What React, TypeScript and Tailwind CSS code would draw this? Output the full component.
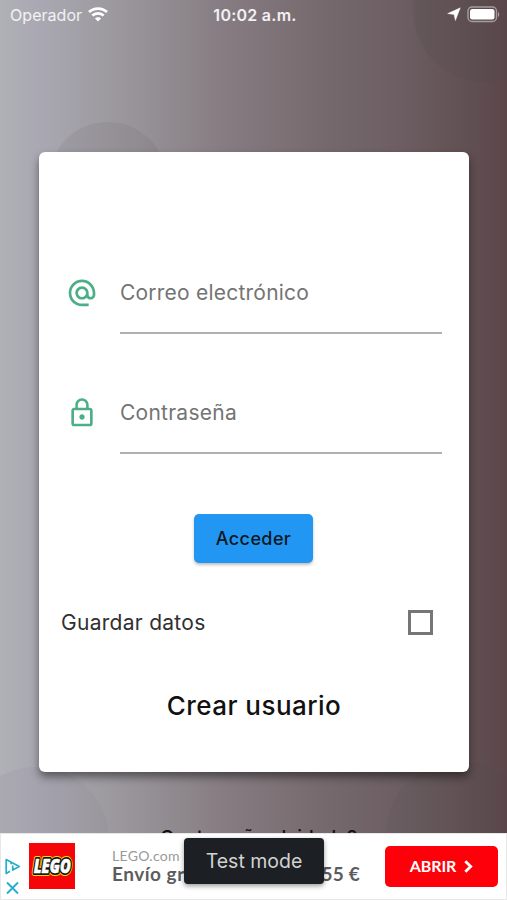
import React from "react";

function WifiIcon() {
  return (
    <svg width="20" height="15" viewBox="0 0 20 15" fill="none" stroke="#fff" strokeWidth="2.7">
      <path d="M1 5.1C6 .4 14 .4 19 5.1" />
      <path d="M4.3 8.6C7.5 5.7 12.5 5.7 15.7 8.6" />
      <path d="M10 14.4L6.9 11.4C8.7 9.8 11.3 9.8 13.1 11.4Z" fill="#fff" stroke="none" />
    </svg>
  );
}

function StatusBar() {
  return (
    <header className="relative flex h-[30px] shrink-0 items-center pl-[10px] pr-[7px] text-[16px] text-white">
      <div className="flex flex-1 items-center gap-[6px]">
        <span className="tracking-[0.05px] text-white/85">Operador</span>
        <span className="-mt-[2px]"><WifiIcon /></span>
      </div>
      <span className="text-[16px] font-semibold tracking-[0.25px] text-white/90">10:02 a.m.</span>
      <div className="-mt-[2px] flex flex-1 items-center justify-end gap-[6px]">
        <svg width="14" height="14" viewBox="0 0 14 14" fill="#fff">
          <path d="M13.3.8L8.4 13.6L7 7.6L.6 6.6Z" stroke="#fff" strokeWidth=".4" />
        </svg>
        <svg width="33" height="17" viewBox="0 0 33 17" fill="none">
          <rect x="1" y="1" width="28.5" height="14.5" rx="4" stroke="#fff" strokeOpacity=".45" strokeWidth="1.4" />
          <rect x="3" y="3" width="24.5" height="10.5" rx="2.3" fill="#fff" />
          <path d="M31 6v5c1.6-.8 1.6-4.2 0-5z" fill="#fff" fillOpacity=".5" />
        </svg>
      </div>
    </header>
  );
}

function Backdrop() {
  return (
    <svg className="absolute inset-0" width="507" height="900" viewBox="0 0 507 900">
      <circle cx="108" cy="181" r="59" fill="#605860" fillOpacity=".12" />
      <circle cx="485" cy="10" r="72" fill="#4b4b4b" fillOpacity=".15" />
      <circle cx="36" cy="840" r="73" fill="#807888" fillOpacity=".12" />
      <circle cx="460" cy="835" r="74" fill="#514c4e" fillOpacity=".09" />
    </svg>
  );
}

function Field({ icon, children }: { icon: React.ReactNode; children: React.ReactNode }) {
  return (
    <div className="flex h-[81px]">
      <div className="-ml-[2px] flex h-[80px] w-[54px] items-center justify-start">{icon}</div>
      <div className="flex flex-1 items-center border-b-2 border-[#b0b0b0] pt-[1px] text-[21px] text-[#747474]">
        {children}
      </div>
    </div>
  );
}

function AtIcon() {
  return (
    <svg width="32" height="32" viewBox="0 0 24 24" fill="#4caf88">
      <path d="M12 1.95c-5.52 0-10 4.48-10 10s4.48 10 10 10h5v-2h-5c-4.34 0-8-3.66-8-8s3.66-8 8-8 8 3.66 8 8v1.43c0 .79-.71 1.57-1.5 1.57s-1.5-.78-1.5-1.57v-1.43c0-2.76-2.24-5-5-5s-5 2.24-5 5 2.24 5 5 5c1.38 0 2.64-.56 3.54-1.47.65.89 1.77 1.47 2.96 1.47 1.97 0 3.5-1.6 3.5-3.57v-1.43c0-5.52-4.48-10-10-10zm0 13c-1.66 0-3-1.34-3-3s1.34-3 3-3 3 1.34 3 3-1.34 3-3 3z" />
    </svg>
  );
}

function LockIcon() {
  return (
    <svg width="32" height="32" viewBox="0 0 24 24" fill="#4caf88">
      <path d="M12 17c1.1 0 2-.9 2-2s-.9-2-2-2-2 .9-2 2 .9 2 2 2zm6-9h-1V6c0-2.76-2.24-5-5-5S7 3.24 7 6v2H6c-1.1 0-2 .9-2 2v10c0 1.1.9 2 2 2h12c1.1 0 2-.9 2-2V10c0-1.1-.9-2-2-2zM8.9 6c0-1.71 1.39-3.1 3.1-3.1s3.1 1.39 3.1 3.1v2H8.9V6zM18 20H6V10h12v10z" />
    </svg>
  );
}

function LegoLogo() {
  return (
    <svg width="46" height="46" viewBox="0 0 46 46" fontFamily="'Open Sans', sans-serif" fontWeight="800" fontStyle="italic">
      <rect width="46" height="46" fill="#f50508" />
      <g fontSize="19.5" strokeLinejoin="round">
        <text x="4.8" y="29.7" textLength="37" lengthAdjust="spacingAndGlyphs" stroke="#ffd500" strokeWidth="6" fill="#ffd500">LEGO</text>
        <text x="4.8" y="29.7" textLength="37" lengthAdjust="spacingAndGlyphs" stroke="#111" strokeWidth="4" fill="#111">LEGO</text>
        <text x="4.8" y="29.7" textLength="37" lengthAdjust="spacingAndGlyphs" stroke="#fff" strokeWidth=".6" fill="#fff">LEGO</text>
      </g>
    </svg>
  );
}

function AdBanner() {
  return (
    <footer className="relative flex h-[67px] shrink-0 items-center border border-[#e8e8e8] bg-white pl-[4px] pr-[8px] font-['Lato',sans-serif]">
      <div className="flex w-[24px] flex-col gap-[6px] self-end pb-[4px]">
        <svg width="16" height="17" viewBox="0 0 16 17" fill="none" stroke="#23aecb" strokeWidth="1.7" strokeLinejoin="round">
          <path d="M5 13.3L1.2 15.5V1.5L14.2 8.5L7.7 12V7.5" />
          <path d="M6.1 4.6v1.6" />
        </svg>
        <svg width="15" height="14" viewBox="0 0 15 14" stroke="#23aecb" strokeWidth="1.9">
          <path d="M2 1.5L13 12.5M13 1.5L2 12.5" />
        </svg>
      </div>
      <span className="-mt-[1px]"><LegoLogo /></span>
      <div className="ml-[37px] flex flex-1 flex-col whitespace-nowrap">
        <span className="-mt-[2px] text-[14px] leading-[17px] tracking-[0.3px] text-[#999]">LEGO.com</span>
        <span className="flex justify-between pr-[25px] text-[19px] font-bold leading-[20px] text-[#5c5c5c]">
          <span className="tracking-[0.5px]">Envío gratis</span>
          <span className="tracking-[0.2px]">55 €</span>
        </span>
      </div>
      <button className="flex h-[41px] w-[113px] items-center justify-center gap-[8px] rounded-[5px] bg-[#fe0009] text-[16px] font-bold text-white">
        <span className="-mt-[2px] tracking-[-0.1px]">ABRIR</span>
        <svg width="9" height="13" viewBox="0 0 9 13" fill="none" stroke="#fff" strokeWidth="2.8">
          <path d="M1.3 1.2L6.7 6.5L1.3 11.8" />
        </svg>
      </button>
      <div className="absolute left-[183px] top-[4px] flex h-[46px] w-[140px] items-center justify-center rounded-[4px] bg-[#1c2024] pt-[2px] font-['Inter',sans-serif] text-[19.5px] text-[#d2d2d2] shadow-[0_2px_5px_rgba(0,0,0,0.4)]">
        Test mode
      </div>
    </footer>
  );
}

export default function App() {
  return (
    <div className="relative flex h-[900px] w-[507px] flex-col overflow-hidden bg-[linear-gradient(90deg,#b0b0b6_0%,#a9a8b2_8%,#a09ea4_18%,#938e93_31%,#857b80_45%,#76696e_64%,#6b5d61_80%,#604f52_93%,#5c464a_100%)] font-['Inter',sans-serif]">
      <Backdrop />
      <StatusBar />
      <main className="relative mx-[39px] mt-[122px] flex h-[620px] w-[430px] shrink-0 flex-col rounded-[6px] bg-white pt-[101px] shadow-[0_5px_8px_rgba(0,0,0,0.45)]">
        <div className="flex flex-col gap-[39px] pl-[29px] pr-[27px]">
          <Field icon={<AtIcon />}>
            <span className="tracking-[0.22px]">Correo electrónico</span>
          </Field>
          <Field icon={<LockIcon />}>
            <span className="tracking-[0.25px]">Contraseña</span>
          </Field>
        </div>
        <button className="mr-px mt-[60px] h-[49px] w-[119px] self-center rounded-[5px] bg-[#2196f3] text-[18px] font-medium tracking-[0.4px] text-[#101820] shadow-[0_2px_3px_rgba(0,0,0,0.25)]">
          Acceder
        </button>
        <label className="mt-[42px] flex h-[35px] items-center justify-between pl-[22px] pr-[36px] text-[21px] tracking-[0.28px] text-[#303030]">
          Guardar datos
          <span className="size-[25px] border-[3px] border-[#767676]" />
        </label>
        <a className="mt-[48px] self-center text-[26px] font-medium leading-[36px] tracking-[0.45px] text-[#111]">Crear usuario</a>
      </main>
      <div className="relative flex h-[61px] shrink-0 justify-center overflow-hidden pt-[55px]">
        <span className="whitespace-nowrap pl-[10px] text-[19px] font-medium leading-[22px] text-[#111]">Contraseña olvidada?</span>
      </div>
      <AdBanner />
    </div>
  );
}
